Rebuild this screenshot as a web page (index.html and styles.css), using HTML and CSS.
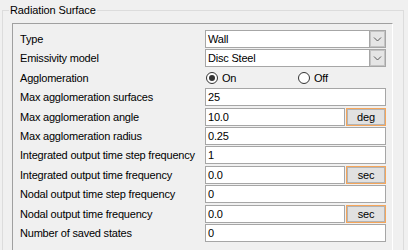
FILE: index.html
```html
<!DOCTYPE html>
<html>
<head>
<meta charset="utf-8">
<link rel="stylesheet" href="styles.css">
</head>
<body>
<div class="group">
  <span class="group-title">Radiation Surface</span>
  <div class="panel">
    <div class="grid">
      <div class="label">Type</div>
      <div class="combo"><span class="combo-text">Wall</span><span class="combo-arrow"><svg width="9" height="6" viewBox="0 0 9 6"><path d="M1 1.5 L4.5 5 L8 1.5" fill="none" stroke="#5a5a5a" stroke-width="1"/></svg></span></div>

      <div class="label">Emissivity model</div>
      <div class="combo"><span class="combo-text">Disc Steel</span><span class="combo-arrow"><svg width="9" height="6" viewBox="0 0 9 6"><path d="M1 1.5 L4.5 5 L8 1.5" fill="none" stroke="#5a5a5a" stroke-width="1"/></svg></span></div>

      <div class="label">Agglomeration</div>
      <div class="radios">
        <div class="radio-opt"><span class="radio checked"></span><span>On</span></div>
        <div class="radio-opt"><span class="radio"></span><span>Off</span></div>
      </div>

      <div class="label">Max agglomeration surfaces</div>
      <div class="field">25</div>

      <div class="label">Max agglomeration angle</div>
      <div class="pair"><div class="field">10.0</div><div class="btn">deg</div></div>

      <div class="label">Max agglomeration radius</div>
      <div class="field">0.25</div>

      <div class="label">Integrated output time step frequency</div>
      <div class="field">1</div>

      <div class="label">Integrated output time frequency</div>
      <div class="pair"><div class="field">0.0</div><div class="btn">sec</div></div>

      <div class="label">Nodal output time step frequency</div>
      <div class="field">0</div>

      <div class="label">Nodal output time frequency</div>
      <div class="pair"><div class="field">0.0</div><div class="btn">sec</div></div>

      <div class="label">Number of saved states</div>
      <div class="field">0</div>
    </div>
  </div>
</div>
</body>
</html>
```
FILE: styles.css
```css
html, body {
  margin: 0;
  padding: 0;
  background: #f0f0f0;
  width: 408px;
  height: 250px;
  overflow: hidden;
}
body {
  font-family: "Liberation Sans", Arial, sans-serif;
  font-size: 11px;
  letter-spacing: -0.2px;
  color: #000;
}
.group {
  position: relative;
  margin: 10px 0 0 2px;
  width: 400px;
  height: 239px;
  border: 1px solid #dcdcdc;
  border-bottom: none;
}
.group-title {
  position: absolute;
  left: 6px;
  top: -8px;
  padding: 0 1px;
  line-height: 14px;
  background: #f0f0f0;
  letter-spacing: -0.1px;
}
.panel {
  margin: 12px 0 0 9px;
  width: 379px;
  height: 226px;
  border-top: 1px solid #a0a0a0;
  border-left: 1px solid #a0a0a0;
  border-right: 1px solid #ffffff;
}
.grid {
  display: grid;
  grid-template-columns: 185px 181px;
  grid-auto-rows: 18px;
  row-gap: 1.4px;
  padding: 6px 0 0 7px;
}
.label {
  line-height: 18px;
  white-space: nowrap;
}
.combo {
  display: flex;
  border: 1px solid #a6a6a6;
  background: #fff;
  box-sizing: border-box;
  height: 18px;
}
.combo-text {
  flex: 1;
  padding-left: 2px;
  line-height: 16px;
}
.combo-arrow {
  width: 15px;
  background: #e5e5e5;
  border-left: 1px solid #a6a6a6;
  box-shadow: inset 0 0 0 1px #c4c4c4;
  display: flex;
  align-items: center;
  justify-content: center;
}
.radios {
  display: grid;
  grid-template-columns: 92px 89px;
  align-items: center;
}
.radio-opt {
  display: flex;
  align-items: center;
  gap: 4px;
  padding-left: 1px;
}
.radio {
  width: 12px;
  height: 12px;
  border: 1px solid #333;
  border-radius: 50%;
  box-sizing: border-box;
  background: #fff;
  display: flex;
  align-items: center;
  justify-content: center;
}
.radio.checked::after {
  content: "";
  width: 6px;
  height: 6px;
  border-radius: 50%;
  background: #333;
}
.field {
  border: 1px solid #a6a6a6;
  background: #fff;
  box-sizing: border-box;
  height: 18px;
  line-height: 16px;
  padding-left: 2px;
}
.pair {
  display: grid;
  grid-template-columns: 140px 40px;
  column-gap: 1px;
}
.btn {
  border: 1px solid #f5a65b;
  box-shadow: inset 0 0 0 1px #b4b4b4;
  background: #e1e1e1;
  box-sizing: border-box;
  height: 18px;
  line-height: 16px;
  text-align: center;
}
```
